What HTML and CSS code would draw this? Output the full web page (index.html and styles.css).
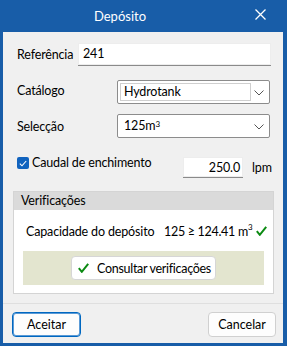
FILE: index.html
```html
<!DOCTYPE html>
<html lang="pt">
<head>
<meta charset="utf-8">
<link rel="stylesheet" href="styles.css">
</head>
<body>
<div class="window">
  <div class="titlebar">
    <div class="title">Depósito</div>
    <div class="close">
      <svg width="11" height="11" viewBox="0 0 11 11"><path d="M0.5 0.5 L10.5 10.5 M10.5 0.5 L0.5 10.5" stroke="#fff" stroke-width="1.3" fill="none"/></svg>
    </div>
  </div>
  <div class="content">
    <div class="main">
      <div class="row row-ref">
        <label class="lbl">Referência</label>
        <div class="textbox ref-box">241</div>
      </div>
      <div class="row row-cat">
        <label class="lbl lbl-up">Catálogo</label>
        <div class="combo">
          <div class="combo-edit">Hydrotank</div>
          <svg class="chev" width="10" height="6" viewBox="0 0 10 6"><path d="M0.5 0.5 L5 5 L9.5 0.5" stroke="#555" stroke-width="1" fill="none"/></svg>
        </div>
      </div>
      <div class="row row-sel">
        <label class="lbl">Selecção</label>
        <div class="combo">
          <div class="combo-text">125m<sup>3</sup></div>
          <svg class="chev" width="10" height="6" viewBox="0 0 10 6"><path d="M0.5 0.5 L5 5 L9.5 0.5" stroke="#555" stroke-width="1" fill="none"/></svg>
        </div>
      </div>
      <div class="row row-flow">
        <div class="check-wrap">
          <span class="checkbox"><svg width="8" height="7" viewBox="0 0 8 7"><path d="M0.8 3.6 L3 5.8 L7.2 1" stroke="#fff" stroke-width="1.1" fill="none"/></svg></span>
          <span class="check-label">Caudal de enchimento</span>
        </div>
        <div class="textbox num-box">250.0</div>
        <span class="unit">lpm</span>
      </div>
      <div class="group">
        <div class="group-head">Verificações</div>
        <div class="group-body">
          <div class="verif-row">
            <span class="verif-name">Capacidade do depósito</span>
            <span class="verif-val">125 ≥ 124.41 m<sup>3</sup></span>
            <svg class="tick" width="11" height="10" viewBox="0 0 11 10"><path d="M0.8 5.2 L3.8 8.8 L10.2 0.8" stroke="#0b8a12" stroke-width="2" fill="none"/></svg>
          </div>
          <div class="olive">
            <button class="btn-verif"><svg width="11" height="10" viewBox="0 0 11 10"><path d="M0.8 5.2 L3.8 8.8 L10.2 0.8" stroke="#0b8a12" stroke-width="2" fill="none"/></svg><span>Consultar verificações</span></button>
          </div>
        </div>
      </div>
    </div>
    <div class="footer">
      <button class="btn btn-ok">Aceitar</button>
      <button class="btn btn-cancel">Cancelar</button>
    </div>
  </div>
</div>
</body>
</html>
```
FILE: styles.css
```css
* { box-sizing: border-box; }
html, body { margin: 0; padding: 0; }
body {
  font-family: Lato, "Noto Sans", sans-serif;
  font-size: 12.5px;
  letter-spacing: -0.15px;
  color: #000;
  white-space: nowrap;
}
.window {
  width: 287px;
  height: 346px;
  background: #185da8;
  padding: 0 4px 3px 3px;
  display: flex;
  flex-direction: column;
}
.titlebar {
  height: 32px;
  display: flex;
  align-items: center;
  color: #fff;
}
.title {
  flex: 1;
  text-align: center;
  font-size: 13px;
  letter-spacing: 0;
  padding-bottom: 1px;
}
.close {
  width: 46px;
  height: 32px;
  display: flex;
  align-items: center;
  justify-content: center;
  padding-bottom: 3px;
}
.content {
  flex: 1;
  background: #f0f0f0;
  display: flex;
  flex-direction: column;
}
.main {
  padding: 11px 9px 0 10px;
  flex: 1;
}
.row {
  display: flex;
  align-items: center;
}
.lbl {
  padding-left: 4px;
}
.lbl-up {
  margin-top: -4px;
}
.textbox {
  background: #fff;
  border-bottom: 1px solid #8a8a8a;
  box-shadow: inset 0 0 0 1px #ededed;
}
.ref-box {
  margin-left: auto;
  width: 193px;
  height: 23px;
  padding: 1px 6px 0 5px;
  line-height: 19px;
  margin-right: 3px;
}
.row-cat { margin-top: 14px; }
.row-sel { margin-top: 10px; }
.combo {
  margin-left: auto;
  margin-right: 4px;
  width: 153px;
  height: 24px;
  background: #fff;
  border: 1px solid #8c8c8c;
  border-radius: 2px;
  display: flex;
  align-items: center;
  position: relative;
}
.combo-edit {
  margin-left: 2px;
  width: 131px;
  height: 18px;
  border: 1px solid #cfcfcf;
  padding-left: 3px;
  line-height: 16px;
}
.combo-text {
  padding-left: 6px;
  line-height: 16px;
}
sup {
  font-size: 8px;
  vertical-align: top;
  position: relative;
  top: -2px;
}
.chev {
  position: absolute;
  right: 5px;
  top: 9px;
}
.row-flow {
  margin-top: 19px;
  height: 21px;
}
.check-wrap {
  display: flex;
  align-items: center;
  padding-left: 4px;
  align-self: flex-start;
}
.checkbox {
  width: 12px;
  height: 12px;
  border-radius: 2px;
  background: #1163be;
  display: flex;
  align-items: center;
  justify-content: center;
}
.check-label {
  margin-left: 3px;
  line-height: 12px;
}
.num-box {
  margin-left: auto;
  width: 60px;
  height: 21px;
  text-align: right;
  padding-right: 3px;
  line-height: 21px;
}
.unit {
  width: 31px;
  padding-left: 9px;
}
.group {
  margin-top: 13px;
  border: 1px solid #d4d4d4;
}
.group-head {
  height: 18px;
  background: #dadada;
  padding-left: 7px;
  line-height: 17px;
}
.group-body {
  background: #fff;
  padding: 12px 9px 8px 9px;
}
.verif-row {
  display: flex;
  align-items: center;
  height: 18px;
  padding-left: 3px;
}
.verif-name {
  width: 138px;
  flex-shrink: 0;
}
.verif-val {
  flex-shrink: 0;
  letter-spacing: -0.3px;
}
.tick {
  margin-left: 4px;
  flex-shrink: 0;
}
.olive {
  margin-top: 11px;
  background: #e3e5cf;
  height: 34px;
  display: flex;
  align-items: center;
  justify-content: center;
}
.btn-verif {
  font: inherit;
  height: 24px;
  background: #fff;
  border: 1px solid #d6d6d6;
  border-radius: 4px;
  display: flex;
  align-items: center;
  padding: 0 4px 0 6px;
  color: #000;
  letter-spacing: -0.3px;
}
.btn-verif svg { margin-right: 8px; }
.footer {
  border-top: 1px solid #dfdfdf;
  margin-top: 9px;
  height: 40px;
  display: flex;
  justify-content: space-between;
  align-items: flex-start;
  padding: 8px 7px 0 9px;
}
.btn {
  font: inherit;
  height: 25px;
  border-radius: 4px;
  background: #fdfdfd;
  color: #000;
}
.btn-ok {
  width: 69px;
  border: 1px solid #0067c0;
  box-shadow: inset 0 0 0 1px #5a9ad6;
}
.btn-cancel {
  width: 68px;
  border: 1px solid #d0d0d0;
}
```
